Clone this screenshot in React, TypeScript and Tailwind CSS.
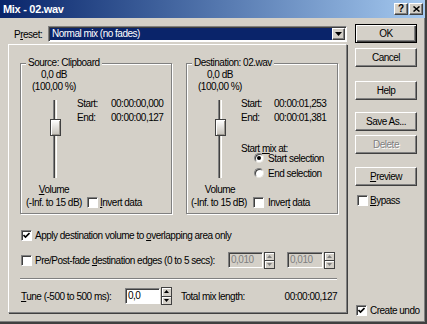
import React from 'react';

const raised =
  'bg-[#d4d0c8] border border-t-white border-l-white border-r-[#404040] border-b-[#404040] shadow-[inset_-1px_-1px_0_#808080]';
const sunken =
  'border border-t-[#808080] border-l-[#808080] border-r-white border-b-white shadow-[inset_1px_1px_0_#404040]';

const CheckBox: React.FC<{ checked?: boolean }> = ({ checked }) => (
  <div className={`w-[11px] h-[11px] shrink-0 bg-white flex items-center justify-center ${sunken}`}>
    {checked && (
      <svg width="7" height="7" viewBox="0 0 7 7">
        <polyline points="0.5,3 2.5,5 6.5,1" fill="none" stroke="black" strokeWidth="1.6" />
      </svg>
    )}
  </div>
);

const Radio: React.FC<{ checked?: boolean }> = ({ checked }) => (
  <div className="w-[10px] h-[10px] shrink-0 rounded-full bg-white border border-t-[#808080] border-l-[#808080] border-r-[#e8e6e0] border-b-[#e8e6e0] shadow-[inset_1px_1px_0_#404040] flex items-center justify-center">
    {checked && <div className="w-[4px] h-[4px] rounded-full bg-black" />}
  </div>
);

const Arrow: React.FC<{ up?: boolean; color: string }> = ({ up, color }) => (
  <svg width="5" height="3" viewBox="0 0 5 3">
    <path d={up ? 'M2.5 0 L5 3 L0 3 Z' : 'M0 0 L5 0 L2.5 3 Z'} fill={color} />
  </svg>
);

const Spin: React.FC<{ disabled?: boolean; tall?: boolean }> = ({ disabled, tall }) => {
  const c = disabled ? '#808080' : '#000';
  return (
    <div className={`ml-[1px] w-[11px] ${tall ? 'h-[18px]' : 'h-[17px]'} flex flex-col border border-[#404040]`}>
      <div className="flex-1 bg-[#d4d0c8] border-b border-b-[#404040] shadow-[inset_1px_1px_0_#fff] flex items-center justify-center">
        <Arrow up color={c} />
      </div>
      <div className="flex-1 bg-[#d4d0c8] shadow-[inset_1px_1px_0_#fff] flex items-center justify-center">
        <Arrow color={c} />
      </div>
    </div>
  );
};

const Slider: React.FC<{ className: string }> = ({ className }) => (
  <div className={`flex flex-col items-center w-[12px] pt-[3px] ${className}`}>
    <div className="w-[4px] h-[19px] border-l border-l-[#808080] border-r border-r-white bg-[#e4e1da] shadow-[inset_1px_0_0_#404040]" />
    <div className="w-[11px] h-[17px] border border-[#404040] bg-linear-to-b from-white to-[#c4c0b8] shadow-[inset_1px_1px_0_#fff,inset_-1px_-1px_0_#9a968e]" />
    <div className="w-[4px] h-[42px] border-l border-l-[#808080] border-r border-r-white bg-[#e4e1da] shadow-[inset_1px_0_0_#404040]" />
  </div>
);

const Button: React.FC<{ children: React.ReactNode; className?: string; def?: boolean; disabled?: boolean }> = ({
  children,
  className = '',
  def,
  disabled,
}) => (
  <div
    className={`w-[62px] h-[19px] flex items-center justify-center ${
      def
        ? 'bg-[#d4d0c8] border border-black shadow-[inset_1px_1px_0_#fff,inset_-1px_-1px_0_#404040,inset_-2px_-2px_0_#808080]'
        : raised
    } ${disabled ? 'text-[#808080] [text-shadow:1px_1px_0_#fff]' : ''} ${className}`}
  >
    {children}
  </div>
);

const Frame: React.FC<{ title: string; children: React.ReactNode }> = ({ title, children }) => (
  <div className="w-[152px] h-[151px] border border-[#808080] shadow-[1px_1px_0_#fff,inset_1px_1px_0_#fff] flex flex-col">
    <div className="-mt-[7px] ml-[5px] self-start px-[2px] h-[12px] leading-[12px] bg-[#d4d0c8]">{title}</div>
    <div className="w-[66px] flex flex-col items-center leading-[12px]">
      <span>0,0 dB</span>
      <span>(100,00 %)</span>
    </div>
    {children}
  </div>
);

export default function App() {
  return (
    <div className="w-[427px] h-[324px] bg-[#d4d0c8] text-black text-[10px] tracking-[-0.5px] font-['Liberation_Sans',Arial,sans-serif] flex flex-col border-r-2 border-b-2 border-[#404040] shadow-[inset_-1px_-1px_0_#808080] overflow-hidden select-none">
      {/* title bar */}
      <div className="h-[18px] shrink-0 flex items-center bg-linear-to-r from-[#0a246a] to-[#a6caf0]">
        <span className="pl-[3px] text-white font-bold text-[11px] tracking-[-0.3px]">Mix - 02.wav</span>
        <div className="ml-auto mr-[2px] flex gap-[1px]">
          <div className={`w-[14px] h-[12px] flex items-center justify-center font-bold text-[10px] leading-none tracking-normal ${raised}`}>
            ?
          </div>
          <div className={`w-[14px] h-[12px] flex items-center justify-center ${raised}`}>
            <svg width="7" height="6" viewBox="0 0 7 6">
              <path d="M0.5 0.5 L6.5 5.5 M6.5 0.5 L0.5 5.5" stroke="black" strokeWidth="1.5" />
            </svg>
          </div>
        </div>
      </div>

      <div className="flex flex-1">
        {/* left column */}
        <div className="w-[347px] flex flex-col">
          <div className="mt-[8px] h-[16px] flex items-center">
            <span className="pl-[14px] w-[48px]">
              P<span className="underline">r</span>eset:
            </span>
            <div className={`w-[299px] h-[16px] flex bg-white p-[1px] ${sunken}`}>
              <div className="flex-1 bg-[#0a246a] text-white pl-[2px] leading-[12px]">Normal mix (no fades)</div>
              <div className={`w-[13px] flex items-center justify-center ${raised}`}>
                <svg width="7" height="4" viewBox="0 0 7 4">
                  <path d="M0 0 L7 0 L3.5 4 Z" fill="black" />
                </svg>
              </div>
            </div>
          </div>

          <div className="ml-[8px] mt-[2px] w-[339px] h-[269px] border border-t-white border-l-white border-r-[#808080] border-b-[#808080] shadow-[1px_1px_0_#404040] pl-[11px] pt-[18px] flex flex-col">
            <div className="flex gap-[14px]">
              <Frame title="Source: Clipboard">
                <div className="mt-[4px] h-[87px] flex">
                  <Slider className="ml-[28px]" />
                  <div className="ml-[16px] flex flex-col">
                    <div className="flex h-[14px] leading-[14px]">
                      <span className="w-[34px]">Start:</span>
                      <span>00:00:00,000</span>
                    </div>
                    <div className="flex h-[14px] leading-[14px]">
                      <span className="w-[34px]">End:</span>
                      <span>00:00:00,127</span>
                    </div>
                  </div>
                </div>
                <div className="w-[66px] text-center leading-[12px]">
                  <span className="underline">V</span>olume
                </div>
                <div className="flex items-center h-[12px] pl-[5px]">
                  <span className="w-[61px]">(-Inf. to 15 dB)</span>
                  <CheckBox />
                  <span className="ml-[2px]">
                    <span className="underline">I</span>nvert data
                  </span>
                </div>
              </Frame>

              <Frame title="Destination: 02.wav">
                <div className="mt-[4px] h-[87px] flex">
                  <Slider className="ml-[27px]" />
                  <div className="ml-[15px] flex flex-col">
                    <div className="flex h-[14px] leading-[14px]">
                      <span className="w-[33px]">Start:</span>
                      <span>00:00:01,253</span>
                    </div>
                    <div className="flex h-[14px] leading-[14px]">
                      <span className="w-[33px]">End:</span>
                      <span>00:00:01,381</span>
                    </div>
                    <div className="mt-[20px] h-[8px] leading-[8px]">
                      Start <span className="underline">m</span>ix at:
                    </div>
                    <div className="h-[10px] flex items-center pl-[13px]">
                      <Radio checked />
                      <span className="ml-[4px]">Start selection</span>
                    </div>
                    <div className="mt-[5px] h-[10px] flex items-center pl-[13px]">
                      <Radio />
                      <span className="ml-[4px]">End selection</span>
                    </div>
                  </div>
                </div>
                <div className="w-[66px] text-center leading-[12px]">Volume</div>
                <div className="flex items-center h-[12px] pl-[4px]">
                  <span className="w-[62px]">(-Inf. to 15 dB)</span>
                  <CheckBox />
                  <span className="ml-[4px]">
                    Inver<span className="underline">t</span> data
                  </span>
                </div>
              </Frame>
            </div>

            <div className="mt-[15px] h-[12px] flex items-center pl-[1px]">
              <CheckBox checked />
              <span className="ml-[3px]">
                Apply destination volume to <span className="underline">o</span>verlapping area only
              </span>
            </div>

            <div className="mt-[11px] h-[16px] flex items-center pl-[1px]">
              <CheckBox />
              <span className="ml-[3px] w-[193px]">
                Pre/Post-fade <span className="underline">d</span>estination edges (0 to 5 secs):
              </span>
              <div className={`w-[35px] h-[16px] bg-[#d4d0c8] text-[#808080] pl-[2px] leading-[14px] ${sunken}`}>0,010</div>
              <Spin disabled />
              <div className={`ml-[12px] w-[36px] h-[16px] bg-[#d4d0c8] text-[#808080] pl-[2px] leading-[14px] ${sunken}`}>
                0,010
              </div>
              <Spin disabled />
            </div>

            <div className="mt-[10px] w-[317px] h-[2px] border-t border-t-[#808080] border-b border-b-white" />

            <div className="mt-[8px] h-[16px] w-[317px] flex items-center pl-[1px]">
              <span className="w-[104px]">
                <span className="underline">T</span>une (-500 to 500 ms):
              </span>
              <div className={`w-[35px] h-[16px] bg-white pl-[2px] leading-[14px] ${sunken}`}>0,0</div>
              <Spin tall />
              <span className="ml-[9px]">Total mix length:</span>
              <span className="ml-auto">00:00:00,127</span>
            </div>
          </div>
        </div>

        {/* right column */}
        <div className="flex-1 flex flex-col pl-[8px]">
          <Button def className="mt-[6px]">
            OK
          </Button>
          <Button className="mt-[5px]">Cancel</Button>
          <Button className="mt-[14px]">Help</Button>
          <Button className="mt-[12px]">Save As...</Button>
          <Button className="mt-[4px]" disabled>
            Delete
          </Button>
          <Button className="mt-[13px]">
            <span className="underline">P</span>review
          </Button>
          <div className="mt-[8px] h-[12px] flex items-center pl-[2px]">
            <CheckBox />
            <span className="ml-[2px]">
              <span className="underline">B</span>ypass
            </span>
          </div>
          <div className="mt-auto mb-[6px] h-[12px] flex items-center pl-[1px]">
            <CheckBox checked />
            <span className="ml-[3px]">Create undo</span>
          </div>
        </div>
      </div>
    </div>
  );
}
